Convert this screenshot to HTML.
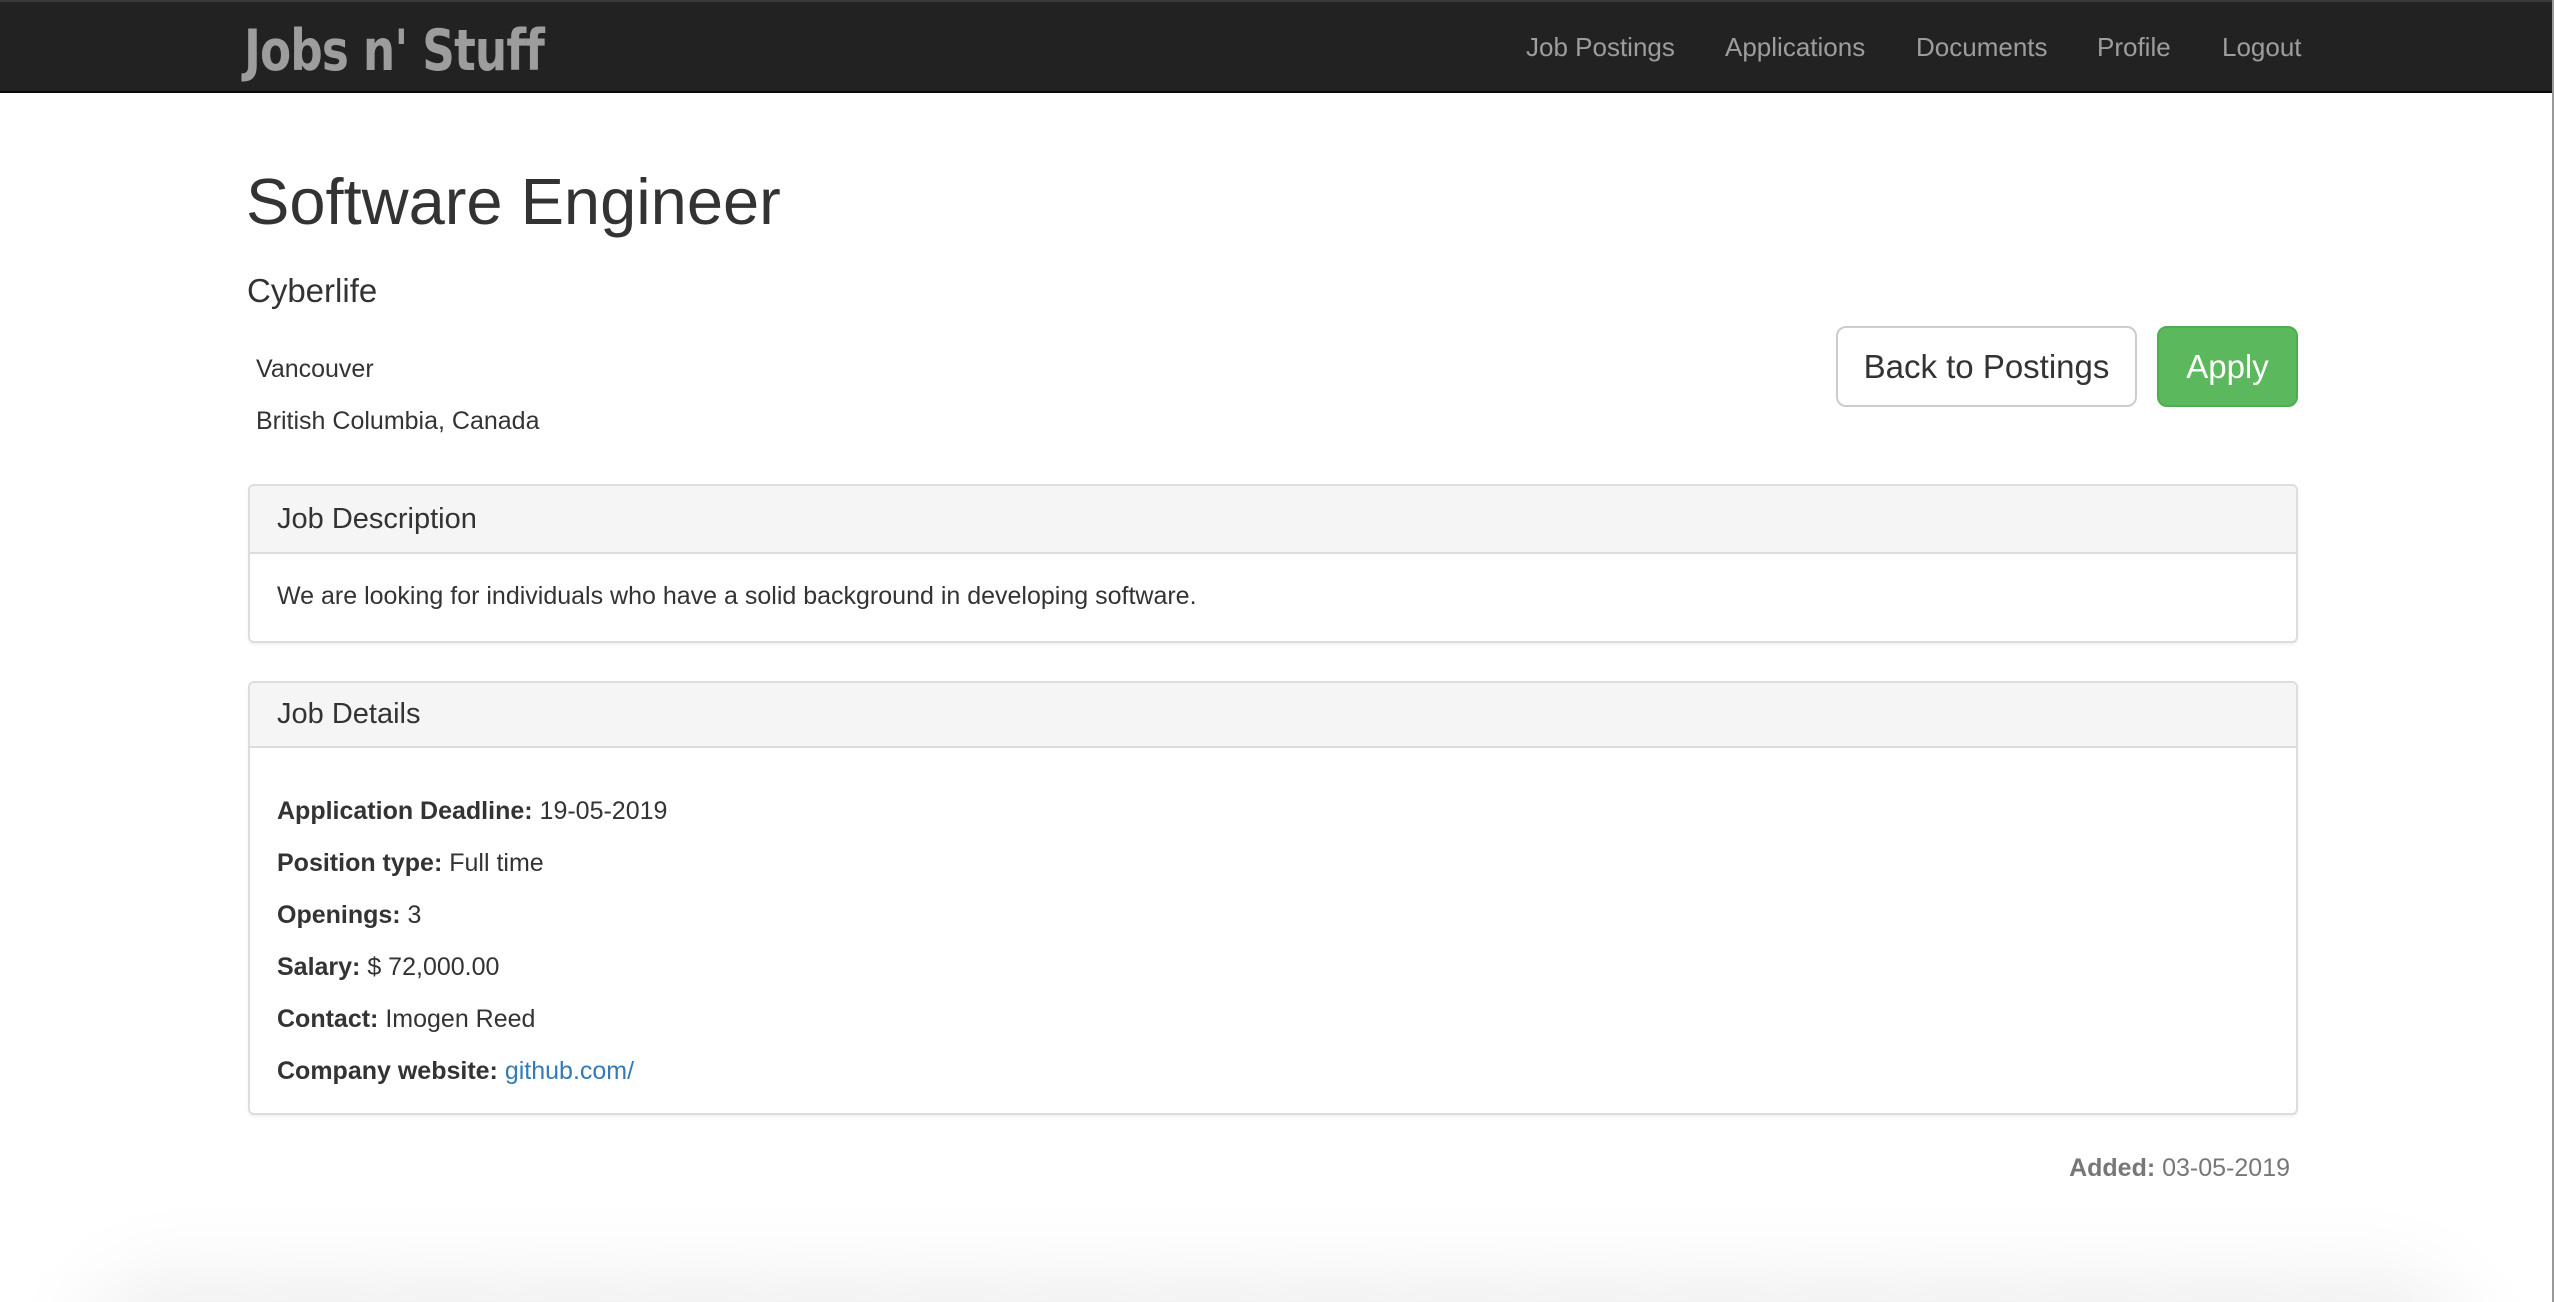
<!DOCTYPE html>
<html><head><meta charset="utf-8">
<style>
*{box-sizing:border-box;margin:0;padding:0}
html,body{width:2554px;height:1302px;overflow:hidden;background:#fff}
body{font-family:"Liberation Sans",Arial,sans-serif;color:#333;font-size:25px;position:relative}
.wrap{position:absolute;left:0;top:0;width:2554px;height:1302px;overflow:hidden}
.nav{position:absolute;left:0;top:0;width:2554px;height:93px;background:#222;border-top:2px solid #3a3a3a;border-bottom:2px solid #080808}
.brand{position:absolute;left:244px;top:14px;font-family:"Liberation Sans Narrow","DejaVu Sans Condensed","Liberation Sans",sans-serif;font-weight:bold;font-size:57px;color:#9d9d9d;line-height:70px;letter-spacing:-1px;transform:scaleX(0.885);transform-origin:0 0}
.nav a{position:absolute;top:28px;font-size:26px;color:#9d9d9d;text-decoration:none;line-height:34px}
h1{position:absolute;left:246px;top:162px;font-size:65px;font-weight:500;line-height:80px;color:#333}
h4{position:absolute;left:247px;top:271px;font-size:33px;font-weight:500;line-height:40px}
.loc{position:absolute;left:256px;font-size:25px;line-height:30px}
.btn{position:absolute;top:326px;height:81px;border-radius:10px;font-size:33px;line-height:77px;text-align:center}
.b1{left:1836px;width:301px;border:2px solid #ccc;background:#fff;color:#333}
.b2{left:2157px;width:141px;border:2px solid #4cae4c;background:#5cb85c;color:#fff}
.panel{position:absolute;left:248px;width:2050px;border:2px solid #ddd;border-radius:6px;box-shadow:0 2px 3px rgba(0,0,0,.06);background:#fff}
.ph{background:#f5f5f5;border-bottom:2px solid #ddd;font-size:29px;padding-left:27px;border-radius:5px 5px 0 0}
.pb{position:relative}
.row{position:absolute;left:27px;font-size:25px;line-height:30px;white-space:nowrap}
b{font-weight:bold}
a.l{color:#337ab7;text-decoration:none}
.added{position:absolute;right:264px;top:1153px;font-size:25px;color:#777;line-height:30px}
.shade{position:absolute;left:110px;top:1310px;width:2330px;height:100px;box-shadow:0 0 90px 30px rgba(0,0,0,.08);border-radius:60px}
.edge{position:absolute;right:0;top:0;width:2px;height:1302px;background:#999}
</style></head><body><div class="wrap">
<div class="nav">
<div class="brand">Jobs n' Stuff</div>
<a style="left:1526px">Job Postings</a>
<a style="left:1725px">Applications</a>
<a style="left:1916px">Documents</a>
<a style="left:2097px">Profile</a>
<a style="left:2222px">Logout</a>
</div>
<h1>Software Engineer</h1>
<h4>Cyberlife</h4>
<div class="loc" style="top:354px">Vancouver</div>
<div class="loc" style="top:406px">British Columbia, Canada</div>
<div class="btn b1">Back to Postings</div>
<div class="btn b2">Apply</div>
<div class="panel" style="top:484px;height:159px">
<div class="ph" style="height:68px;line-height:66px">Job Description</div>
<div class="pb"><div class="row" style="top:27px">We are looking for individuals who have a solid background in developing software.</div></div>
</div>
<div class="panel" style="top:681px;height:434px">
<div class="ph" style="height:65px;line-height:63px">Job Details</div>
<div class="pb">
<div class="row" style="top:48px"><b>Application Deadline:</b> 19-05-2019</div>
<div class="row" style="top:100px"><b>Position type:</b> Full time</div>
<div class="row" style="top:152px"><b>Openings:</b> 3</div>
<div class="row" style="top:204px"><b>Salary:</b> $ 72,000.00</div>
<div class="row" style="top:256px"><b>Contact:</b> Imogen Reed</div>
<div class="row" style="top:308px"><b>Company website:</b> <a class="l">github.com/</a></div>
</div>
</div>
<div class="added"><b>Added:</b> 03-05-2019</div>
<div class="shade"></div>
<div class="edge"></div>
</div></body></html>
